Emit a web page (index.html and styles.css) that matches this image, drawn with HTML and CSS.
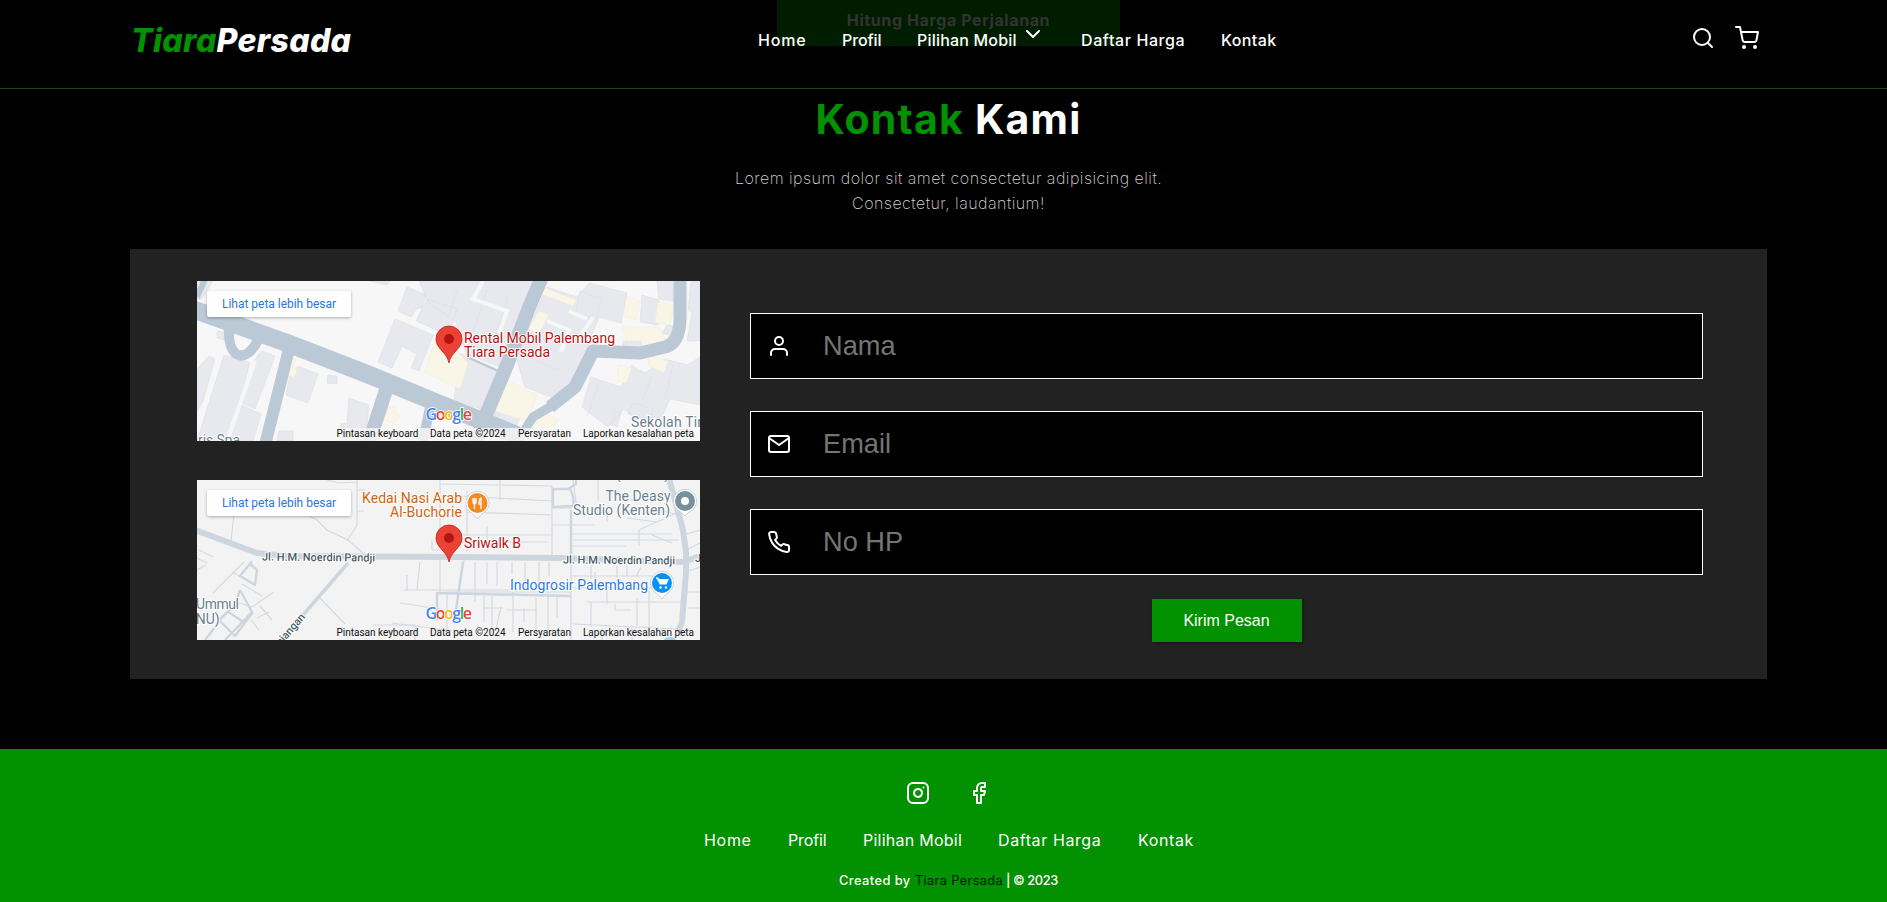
FILE: index.html
```html
<!DOCTYPE html>
<html lang="id">
<head>
<meta charset="utf-8">
<title>Tiara Persada</title>
<link rel="stylesheet" href="styles.css">
</head>
<body>
<div class="quote-button">Hitung Harga Perjalanan</div>
<header class="navbar">
  <a class="logo"><span>Tiara</span>Persada</a>
  <nav class="menu">
    <a class="m-home">Home</a><a class="m-profil">Profil</a><a class="m-mobil">Pilihan Mobil<svg class="chevron" viewBox="0 0 24 24"><path d="m6 9 6 6 6-6"/></svg></a><a class="m-harga">Daftar Harga</a><a class="m-kontak">Kontak</a>
  </nav>
  <div class="actions">
    <svg class="icon" viewBox="0 0 24 24"><circle cx="11" cy="11" r="8"/><path d="m21 21-4.35-4.35"/></svg>
    <svg class="icon" viewBox="0 0 24 24"><circle cx="9" cy="21" r="1"/><circle cx="20" cy="21" r="1"/><path d="M1 1h4l2.68 13.39a2 2 0 0 0 2 1.61h9.72a2 2 0 0 0 2-1.61L23 6H6"/></svg>
  </div>
</header>

<main class="contact">
  <h2 class="title"><span>Kontak</span> Kami</h2>
  <p class="lead">Lorem ipsum dolor sit amet consectetur adipisicing elit.<br>Consectetur, laudantium!</p>
  <section class="panel">
    <div class="maps">
      <svg class="map" viewBox="0 0 503 160">
        <rect width="503" height="160" fill="#f8f7f7"/>
        <g fill="#e8e9ee" stroke="#dcdee4" stroke-width=".6">
          <path d="M0 0h16L5 18H0zM173 0h20l-3 4zM20 50l8 1-1 8-7-2zM0 88l12-13 6 3-12 42-6 10zM27 74l26 8-22 78H0l10-32zM56 82l8-12 14 5-20 53-15-7zM45 124l19 9-8 27H33zM101 85l20 8-10 29-22-8 4-20zM131 94l9 1v8l-10-1zM152 117l20 7-4 36h-26l2-18 6 1zM82 150h14v10H80z"/>
          <path d="M210 6l19 8-4 13-6 1-5 8-13-6zM230 18l30 10-9 26-32-14zM198 38l38 16-14 36-8-3 6-14-15-8-10 22-14-6zM222 0h116l-8 28-18 38-8 20-35-13-10-32-28-20z"/>
          <path d="M262 72l40 17-14 40-31-9zM350 6l30 10 12-14 38 10-6 30-22-6-8 20-12 40-18 24-36-14-8-26 20-52zM383 10l22 8-6 20-20-6zM445 14l17 5-1 25-18-3zM460 0h16v20l-14-2zM494 0h9v60h-13l5-28-4-3zM426 60h18v9h-18zM470 44l9 2-4 9-10-3z"/>
          <path d="M394 96l30 10 10-22 14 8 20-14 22 6 13-8v48l-30-6-10 22-26-4-10-8-16 18-26-20zM418 130l6 2-4 14-6-2zM436 122l20 6-3 10-22-5zM300 122l26 8-12 28-18-6zM295 130l8 2-3 8-6-2z"/>
          <path d="M260 10l-8 24M290 8l-16 50M312 14l-20 60M340 48l30 12M330 76l34 14M402 100l-12 36M456 92l-10 26M476 84l-8 34" fill="none"/>
        </g>
        <g fill="none" stroke="#f8f7f7" stroke-width="4"><path d="M286 0l-10 18 34 12-8 22M350 40l22 9-8 22M396 36l-12 18M30 160l28-80M372 30l18 8"/></g>
        <g fill="#faf6e7" stroke="#f1ead2" stroke-width=".5">
          <path d="M239 56l14 8 18 18-8 26-35-17zM307 98l33 16-10 26-32-10zM91 76l8 3-3 7 4 3-3 7-9-2zM192 126h7v7l5 2-7 7-11-4zM342 30l10 4-10 18-11-4zM345 6l34 13-3 6-34-13zM430 16l13 4-4 19-13-4zM461 21l16 3-4 20-15-3zM425 46h36l8 12-14 8h-9v-6h-16zM421 84l14 3-6 15-9-2zM451 74l20 6-4 12-15-7zM346 131l16 8-9 10-16-8zM265 122l16 7 1 6-16-4z"/>
        </g>
        <g fill="none" stroke="#bbc8d5" stroke-linejoin="round">
          <path stroke-width="10" d="M32 46Q31 65 38 72Q44 77 51 72Q58 67 62 56"/>
          <path stroke-width="12" d="M92 68 68 164"/>
          <path stroke-width="14" d="M190 106 171 164"/>
          <path stroke-width="10" d="M234 122 225 164"/>
          <path stroke-width="2" d="m270 76 31 14"/>
          <path stroke-width="14" d="M345-4 333 24 310 84 286 141 278 164"/>
          <path stroke-width="13" d="M483-4V32Q484 62 468 66L443 72 396 70 378 106 353 126"/>
          <path stroke-width="9" d="M396 72 378 108 353 126 336 136 318 164"/>
          <path stroke-width="6" d="M0 16 8-2"/>
          <path stroke-width="18" d="M-5 28 90 62 170 93 243 123 320 154"/>
        </g>
        <g class="place muted"><text x="434" y="146" textLength="74">Sekolah Tin</text><text x="434" y="162" opacity=".35">Kesehatan</text><text x="1" y="164" textLength="42">ris Spa</text></g>
        <rect x="137" y="147" width="366" height="13" fill="#f8f7f7" opacity=".82"/>
        <g class="place red"><text x="267" y="62" textLength="151">Rental Mobil Palembang</text><text x="267" y="76" textLength="86">Tiara Persada</text></g>
        <g class="legal"><text x="139.500" y="156" textLength="82">Pintasan keyboard</text><text x="233" y="156" textLength="75.500">Data peta ©2024</text><text x="321" y="156" textLength="53">Persyaratan</text><text x="386" y="156" textLength="111">Laporkan kesalahan peta</text></g>
        <text class="google" x="228.500" y="138.500" textLength="46.500"><tspan fill="#4285f4">G</tspan><tspan fill="#ea4335">o</tspan><tspan fill="#fbbc04">o</tspan><tspan fill="#4285f4">g</tspan><tspan fill="#34a853">l</tspan><tspan fill="#ea4335">e</tspan></text>
        <path d="M252 82C250 71 239 68 239 58a13 13 0 0 1 26 0C265 68 254 71 252 82Z" fill="#ea4335" stroke="#c5221f" stroke-width=".8"/><circle cx="252" cy="58" r="5" fill="#b31412"/>
        <rect class="map-link" x="10" y="10" width="144" height="26" rx="2"/><text class="map-link-text" x="25" y="27" textLength="114">Lihat peta lebih besar</text>
      </svg>
      <svg class="map" viewBox="0 0 503 160">
        <rect width="503" height="160" fill="#f4f3f4"/>
        <g fill="none" stroke="#d2dae1" stroke-width="1.2">
          <path d="M37 34 34 61M112 36 120 40 130 50 151 60 166 73M150 61l10-16V0M130 0l12 3 18-1M160 10h8M160 31h7M243 0v68M235 60v10h10M243 75v40M223 82l-3 28M206 110h110M210 95v16M203 123l45 7M250 113v40M195 143l60 8"/>
          <path d="M0 78 10 83M2 70 16 77M0 90l9-5M16 113 47 82M35 92l13 7M45 104l20 12M39 122l16 5 22-15M63 126l12 14M60 138l12-6M62 150l-8-10M122 117l26 27M176 145h42v15"/>
          <path d="M243 4 355 6M355 6V80M374 30v130M270 11v60M290 46v26M258 55h98M246 62h105M270 32l84 3M355 28h20M355 45h43M374 66h55M401 0v20M410 28v14M430 38l30 4M442 50l40-18M442 50v16M375 54h100M376 60h106M380 30l-4-30"/>
          <path d="M267 80l-8 50M248 112h126M278 82v40M300 82v24M290 82v22M315 82v12M328 82v28M342 82v30M352 82v14M287 112v30M295 116v34M304 127l-5 22M316 112v40M327 128v14M339 118v32M351 112v38M310 130h30M360 116v22M286 128h20M374 96h90M374 108h93M398 92v20M410 110v14M390 122h100M394 122v25M418 124v6h16M440 118v28M376 144l104 5M452 110v42M490 112h13M491 128h12M420 86v20M394 85v14M430 86v10M444 87l-5 10"/>
          <path d="M486 55l17-5M489 70l14-7M489 92l14-5M420 12l12 8 14-2M405 148v12M435 146v14M303 0v20M261 16l94 5M455 55l20 8M462 30l20 5"/>
        </g>
        <g fill="none" stroke="#cdd6de" stroke-width="2.4" stroke-linejoin="round">
          <path d="M55 81 43 96 58 105 60 90 53 84M43 110 55 132 28 160M43 110l-5 15-16 15 16 16 18-24M30 131l18 12M8 160l14-18"/>
          <path d="M356 9h17q5 10 3 17l-20 1zM371 9l8-5V0M240 112v28M374 30V74"/>
        </g>
        <g fill="none" stroke="#cdd6de" stroke-linejoin="round">
          <path stroke-width="3.5" d="M151 83 100 142 83 162"/>
          <path stroke-width="2.5" d="M266 82 259 130M240 113l134 3"/>
          <path stroke-width="6" d="M472-2 486 50 489 72 489 92 485 142 481 152"/>
          <path stroke-width="6" d="M-2 50 60 73 90 76 260 77 363 78 486 82 503 76"/>
        </g>
        <g class="road-name"><text x="65" y="80.500" textLength="113" transform="rotate(.5 65 80)">Jl. H.M. Noerdin Pandji</text><text x="366" y="83.500" textLength="112" transform="rotate(.4 366 84)">Jl. H.M. Noerdin Pandji</text><text x="498" y="82">Jl</text><text x="76" y="175" transform="rotate(-49 76 175)" textLength="50">Tanjangan</text></g>
        <g class="place muted"><text x="376" y="-1" textLength="96">Studio (Kenten)</text><text x="408.500" y="21" textLength="65">The Deasy</text><text x="376" y="35" textLength="97">Studio (Kenten)</text><text x="-1" y="129" textLength="43">Ummul</text><text x="-6" y="143.500">(NU)</text></g>
        <g class="place orange"><text x="165" y="23" textLength="100">Kedai Nasi Arab</text><text x="193" y="37" textLength="72">Al-Buchorie</text></g>
        <text class="place red" x="267" y="68" textLength="57">Sriwalk B</text>
        <text class="place blue" x="313" y="110" textLength="138">Indogrosir Palembang</text>
        <g stroke="#c4c8cc" stroke-width=".8" fill="#fff"><path d="M280.500 39Q277 34 273 32a11.700 11.700 0 1 1 15 0Q284 34 280.500 39Z"/><path d="M488 36Q485 32 480.500 30a11.700 11.700 0 1 1 15 0Q491 32 488 36Z"/><path d="M465 119Q462 114 457.500 112a11.700 11.700 0 1 1 15 0Q468 114 465 119Z"/></g>
        <circle cx="280.500" cy="23" r="10" fill="#f58a21"/><circle cx="488" cy="21" r="10" fill="#78909c"/><circle cx="488" cy="21" r="4" fill="#fff"/><circle cx="465" cy="103" r="10" fill="#0a90f5"/>
        <path d="M276 18v4q0 2 1.500 2T279 22v-4M277.500 18v11M284 29V18q-2 1-2 6h2" fill="none" stroke="#fff" stroke-width="1.300"/>
        <path d="M459 98h2l2 6h6l2-4.500h-9l1 4.500" fill="#fff" stroke="#fff" stroke-width="1.200"/><circle cx="463.500" cy="107.500" r="1.200" fill="#fff"/><circle cx="469" cy="107.500" r="1.200" fill="#fff"/>
        <circle cx="473" cy="165" r="8" fill="#9fd0f2"/>
        <g class="legal"><text x="139.500" y="156" textLength="82">Pintasan keyboard</text><text x="233" y="156" textLength="75.500">Data peta ©2024</text><text x="321" y="156" textLength="53">Persyaratan</text><text x="386" y="156" textLength="111">Laporkan kesalahan peta</text></g>
        <text class="google" x="228.500" y="138.500" textLength="46.500"><tspan fill="#4285f4">G</tspan><tspan fill="#ea4335">o</tspan><tspan fill="#fbbc04">o</tspan><tspan fill="#4285f4">g</tspan><tspan fill="#34a853">l</tspan><tspan fill="#ea4335">e</tspan></text>
        <path d="M252 82C250 71 239 68 239 58a13 13 0 0 1 26 0C265 68 254 71 252 82Z" fill="#ea4335" stroke="#c5221f" stroke-width=".8"/><circle cx="252" cy="58" r="5" fill="#b31412"/>
        <rect class="map-link" x="10" y="10" width="144" height="26" rx="2"/><text class="map-link-text" x="25" y="27" textLength="114">Lihat peta lebih besar</text>
      </svg>
    </div>
    <form class="form">
      <label class="field"><svg class="icon" viewBox="0 0 24 24"><path d="M20 21v-2a4 4 0 0 0-4-4H8a4 4 0 0 0-4 4v2"/><circle cx="12" cy="7" r="4"/></svg><input type="text" placeholder="Nama"></label>
      <label class="field"><svg class="icon" viewBox="0 0 24 24"><path d="M4 4h16a2 2 0 0 1 2 2v12a2 2 0 0 1-2 2H4a2 2 0 0 1-2-2V6a2 2 0 0 1 2-2z"/><path d="m22 6-10 7L2 6"/></svg><input type="text" placeholder="Email"></label>
      <label class="field"><svg class="icon" viewBox="0 0 24 24"><path d="M22 16.92v3a2 2 0 0 1-2.18 2 19.79 19.79 0 0 1-8.63-3.07 19.5 19.5 0 0 1-6-6 19.79 19.79 0 0 1-3.07-8.67A2 2 0 0 1 4.110 2h3a2 2 0 0 1 2 1.720 12.840 12.840 0 0 0 .7 2.810 2 2 0 0 1-.45 2.110L8.090 9.910a16 16 0 0 0 6 6l1.270-1.270a2 2 0 0 1 2.110-.45 12.840 12.840 0 0 0 2.810.7A2 2 0 0 1 22 16.920z"/></svg><input type="text" placeholder="No HP"></label>
      <button class="submit" type="button">Kirim Pesan</button>
    </form>
  </section>
</main>

<footer class="footer">
  <div class="social">
    <svg class="icon" viewBox="0 0 24 24"><rect x="2" y="2" width="20" height="20" rx="5"/><path d="M16 11.370A4 4 0 1 1 12.630 8 4 4 0 0 1 16 11.370zM17.500 6.500h.01"/></svg>
    <svg class="icon" viewBox="0 0 24 24"><path d="M18 2h-3a5 5 0 0 0-5 5v3H7v4h3v8h4v-8h3l1-4h-4V7a1 1 0 0 1 1-1h3z"/></svg>
  </div>
  <nav class="links"><a class="f-home">Home</a><a class="f-profil">Profil</a><a class="f-mobil">Pilihan Mobil</a><a class="f-harga">Daftar Harga</a><a class="f-kontak">Kontak</a></nav>
  <p class="credit"><span class="by">Created by</span><a class="owner">Tiara Persada</a><span class="year">| © 2023</span></p>
</footer>
</body>
</html>
```
FILE: styles.css
```css
* { box-sizing: border-box; margin: 0; padding: 0; }
body {
  width: 1887px; height: 902px; overflow: hidden; position: relative;
  background: #000; color: #fff; font-family: Inter, "Open Sans", sans-serif;
}
.icon { width: 24px; height: 24px; display: block; fill: none; stroke: currentColor; stroke-width: 2; stroke-linecap: round; stroke-linejoin: round; flex: none; }

.quote-button {
  position: absolute; left: 777px; top: 0; width: 343px; height: 46px;
  background: #001d00; color: #303330; font-weight: 700; font-size: 16px; line-height: 41px; text-align: center; letter-spacing: .6px;
}
.navbar { position: relative; height: 89px; border-bottom: 1px solid #164a16; display: flex; padding: 0 128px 0 131px; white-space: nowrap; }
.logo { width: 627px; font-size: 32px; font-weight: 800; font-style: italic; line-height: 82px; letter-spacing: .3px; }
.logo span { color: #029100; }
.menu { display: flex; flex: 1; font-size: 16px; font-weight: 500; line-height: 80px; }
.m-home { width: 84px; letter-spacing: .8px; }
.m-profil { width: 75px; letter-spacing: -.1px; }
.m-mobil { width: 164px; display: flex; letter-spacing: .2px; }
.m-harga { width: 140px; letter-spacing: .6px; }
.m-kontak { letter-spacing: .4px; }
.chevron { width: 24px; height: 24px; margin: 22px 0 0 4px; fill: none; stroke: #fff; stroke-width: 2; stroke-linecap: round; stroke-linejoin: round; }
.actions { display: flex; gap: 20px; padding-top: 26px; }

.contact { height: 660px; padding: 0 120px 0 130px; }
.title { height: 71px; text-align: center; font-size: 41px; font-weight: 700; line-height: 61px; letter-spacing: 1.2px; }
.title span { color: #029100; }
.lead { height: 89px; padding-top: 6px; text-align: center; font-size: 16px; font-weight: 200; line-height: 25px; letter-spacing: .47px; color: #d6d6d6; }
.panel { height: 430px; background: #222; display: flex; padding: 32px 64px 39px 67px; gap: 50px; }
.maps { display: flex; flex-direction: column; gap: 39px; width: 503px; }
.map { width: 503px; height: 160px; display: block; font-family: Roboto, sans-serif; }
.place { font-size: 14px; paint-order: stroke; stroke: #fff; stroke-width: 2px; stroke-linejoin: round; }
.muted { fill: #6b808d; }
.red { fill: #b31412; }
.orange { fill: #cf6410; }
.blue { fill: #2b7ade; }
.road-name { font-size: 11px; font-weight: 500; fill: #455a64; paint-order: stroke; stroke: #fff; stroke-width: 2px; }
.legal { font-size: 10px; fill: #111; }
.google { font-family: "Open Sans", sans-serif; font-size: 16px; font-weight: 600; paint-order: stroke; stroke: #fff; stroke-width: 1.5px; }
.map-link { fill: #fff; filter: drop-shadow(0 1px 1.5px rgba(0, 0, 0, .3)); }
.map-link-text { font-size: 12px; fill: #2b76dc; }

.form { flex: 1; display: flex; flex-direction: column; padding-top: 32px; }
.field { flex: none; height: 66px; margin-bottom: 32px; border: 1px solid #fff; background: #000; display: flex; align-items: center; padding-left: 16px; }
.field input { flex: 1; height: 60px; margin-left: 32px; border: 0; outline: 0; background: none; color: #fff; font: 27.2px "Liberation Sans", Arial, sans-serif; }
.field input::placeholder { color: #757575; opacity: 1; }
.submit { flex: none; align-self: center; width: 150px; height: 43px; margin-top: -8px; border: 0; background: #029100; color: #fff; font: 16px "Liberation Sans", Arial, sans-serif; box-shadow: 1px 1px 3px rgba(0, 0, 0, .5); }

.footer { height: 153px; background: #029100; padding-top: 32px; }
.social { display: flex; gap: 37px; padding-left: 906px; }
.links { display: flex; padding-left: 704px; margin-top: 19px; font-size: 16px; line-height: 32px; white-space: nowrap; }
.f-home { width: 84px; letter-spacing: .7px; }
.f-profil { width: 75px; letter-spacing: -.1px; }
.f-mobil { width: 135px; letter-spacing: .25px; }
.f-harga { width: 140px; letter-spacing: .6px; }
.f-kontak { letter-spacing: .6px; }
.credit { display: flex; padding-left: 839px; margin-top: 13px; font-size: 12.8px; line-height: 24px; font-weight: 500; white-space: nowrap; }
.by { width: 76px; letter-spacing: .45px; }
.owner { width: 91px; color: #001800; font-weight: 400; letter-spacing: .35px; }
.year { letter-spacing: -.4px; }
```
